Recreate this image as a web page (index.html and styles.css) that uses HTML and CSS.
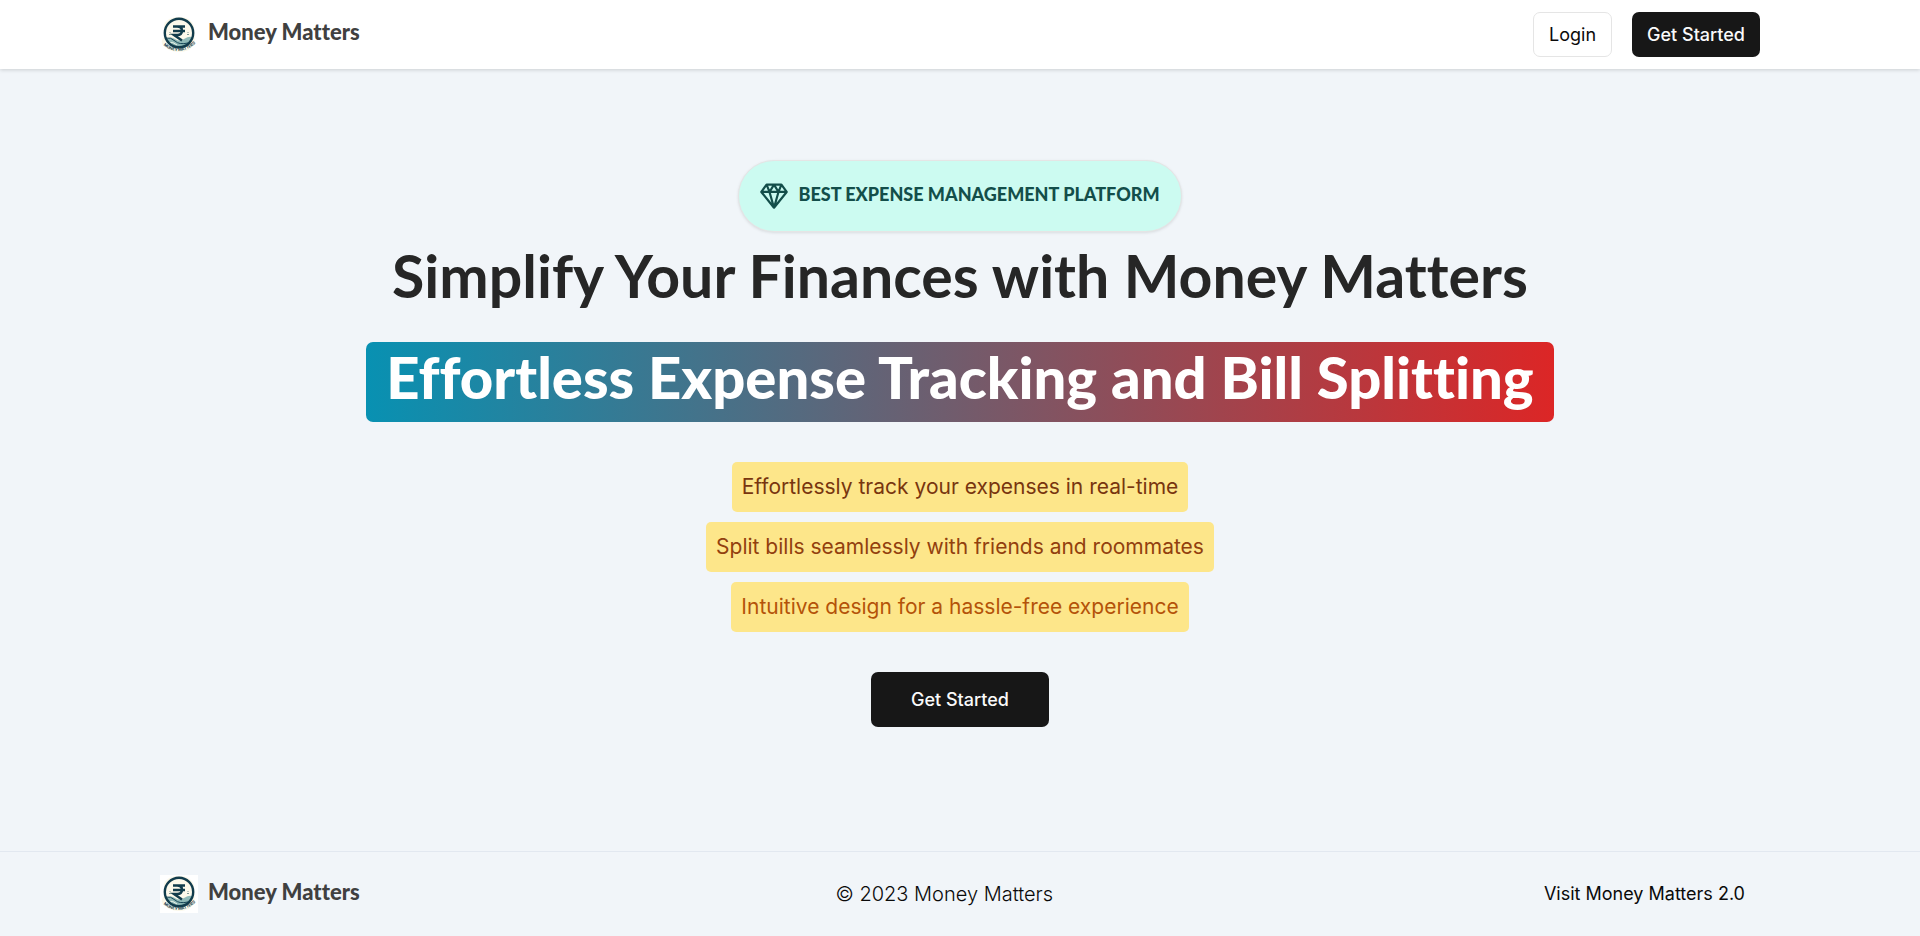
FILE: index.html
```html
<!DOCTYPE html>
<html lang="en">
<head>
<meta charset="utf-8">
<meta name="viewport" content="width=device-width, initial-scale=1">
<title>Money Matters</title>
<link rel="stylesheet" href="styles.css">
</head>
<body>
<header class="header">
  <div class="container">
    <a class="brand" href="#">
      <svg class="logo" viewBox="0 0 38 38" aria-hidden="true">
        <g id="logo">
          <rect width="38" height="38" fill="#fff"/>
          <path d="M4 9Q7 1 19 1t15 9l1 18-6 6q-10 4-20 0l-7-6q-1-4 2-7z" fill="#fcf8e9"/>
          <circle cx="19" cy="17" r="14" fill="#fdf9eb"/>
          <path d="M6 23q5-3 9 0t9 0 8-2l-2 5q-5 5-11 5T8 27z" fill="#8fb9b7"/>
          <path d="M5 22q6-1 10 3t13 2" fill="none" stroke="#174657"/>
          <path d="M8 27q5-2 9 2" fill="none" stroke="#edf4e9"/>
          <circle cx="19" cy="17" r="14.2" fill="none" stroke="#123c4c" stroke-width="2.4"/>
          <path d="M13 10.500h12M13 15h12M14 10.500h3q5 0 5 4.300t-5 4.200h-3l8 5.500" fill="none" stroke="#123c4c" stroke-width="2.500"/>
          <path d="M9 18.500h2M10 16v1M27 18.500h2M28 16v1" stroke="#7d9795"/>
          <path id="logo-arc" d="M2 28Q19 43 37 26" fill="none"/>
          <text class="logo-caption"><textPath href="#logo-arc" startOffset="50%">MONEY MATTERS</textPath></text>
        </g>
      </svg>
      <span>Money Matters</span>
    </a>
    <nav class="actions">
      <a class="button button-outline" href="#">Login</a>
      <a class="button button-dark" href="#">Get Started</a>
    </nav>
  </div>
</header>
<main class="hero">
  <div class="badge">
    <svg class="gem" viewBox="0 0 512 512" fill="none" stroke="currentColor" stroke-width="40" stroke-linejoin="round" aria-hidden="true">
      <path d="M120 48h272l96 134-232 288L24 182zM24 182h464M120 48l54 134 82-134 82 134 54-134M174 182l82 288 82-288"/>
    </svg>
    <span>BEST EXPENSE MANAGEMENT PLATFORM</span>
  </div>
  <h1 class="title">Simplify Your Finances with Money Matters</h1>
  <p class="highlight">Effortless Expense Tracking and Bill Splitting</p>
  <ul class="features">
    <li class="feature feature-first">Effortlessly track your expenses in real-time</li>
    <li class="feature feature-second">Split bills seamlessly with friends and roommates</li>
    <li class="feature feature-third">Intuitive design for a hassle-free experience</li>
  </ul>
  <a class="button button-dark button-large" href="#">Get Started</a>
</main>
<footer class="footer">
  <div class="container">
    <a class="brand" href="#"><svg class="logo" viewBox="0 0 38 38" aria-hidden="true"><use href="#logo"/></svg><span>Money Matters</span></a>
    <p class="copyright">© 2023 Money Matters</p>
    <a class="visit" href="#">Visit Money Matters 2.0</a>
  </div>
</footer>
</body>
</html>
```
FILE: styles.css
```css
* { box-sizing: border-box; }
body {
  margin: 0;
  min-height: 100vh;
  display: flex;
  flex-direction: column;
  background: #f1f5f9;
  color: #0a0a0a;
  font-family: Inter, "Liberation Sans", sans-serif;
  font-variant-ligatures: none;
}
a { color: inherit; text-decoration: none; }
h1, p, ul { margin: 0; padding: 0; }
.container {
  width: 100%;
  max-width: 1600px;
  margin: 0 auto;
  display: flex;
  align-items: center;
  justify-content: space-between;
}
.header {
  padding: 12px 0;
  background: #fff;
  box-shadow: 0 1px 4px rgba(0, 0, 0, 0.16);
}
.brand {
  display: flex;
  align-items: center;
  gap: 10px;
  color: #404040;
  font-family: Lato, sans-serif;
  font-size: 22px;
  font-weight: 900;
  line-height: 30px;
}
.brand span { padding-bottom: 5px; }
.logo { width: 38px; height: 38px; }
.logo-caption {
  fill: #123c4c;
  font-family: Inter, sans-serif;
  font-size: 4px;
  font-weight: 700;
  text-anchor: middle;
}
.actions { display: flex; gap: 20px; }
.button {
  display: inline-flex;
  align-items: center;
  justify-content: center;
  height: 45px;
  padding: 0 15px;
  border-radius: 7px;
  font-size: 18px;
  line-height: 24px;
}
.button-outline { border: 1px solid #e5e5e5; }
.button-dark { background: #171717; color: #fafafa; font-weight: 500; }
.button-large { height: 55px; padding: 0 40px; margin-top: 40px; }
.hero {
  flex: 1;
  display: flex;
  flex-direction: column;
  align-items: center;
  padding: 91px 20px 40px;
}
.badge {
  display: flex;
  align-items: center;
  gap: 10px;
  height: 72px;
  padding: 0 21px;
  border: 1px solid #e5e5e5;
  border-radius: 36px;
  background: #ccfbf1;
  color: #134e4a;
  box-shadow: 0 1px 3px rgba(0, 0, 0, 0.1);
  font-family: Lato, sans-serif;
  font-size: 18px;
  font-weight: 900;
  line-height: 28px;
}
.badge span { padding-bottom: 4px; }
.gem { width: 28px; height: 28px; }
.title {
  margin-top: 4px;
  color: #262626;
  font-family: Lato, sans-serif;
  font-size: 59px;
  font-weight: 700;
  line-height: 80px;
  text-align: center;
}
.highlight {
  margin-top: 26px;
  padding: 0 20px 10px;
  border-radius: 7px;
  background: linear-gradient(to right, #0891b2, #dc2626);
  color: #fff;
  font-family: Lato, sans-serif;
  font-size: 58px;
  font-weight: 900;
  line-height: 70px;
  text-align: center;
}
.features {
  display: flex;
  flex-direction: column;
  align-items: center;
  gap: 10px;
  margin-top: 40px;
  list-style: none;
}
.feature {
  padding: 10px;
  border-radius: 5px;
  background: #fde68a;
  font-size: 21px;
  line-height: 30px;
  font-weight: 400;
}
.feature-first { color: #78350f; }
.feature-second { color: #92400e; }
.feature-third { color: #b45309; }
.footer { padding: 23px 0; border-top: 1px solid #e2e8f0; }
.copyright { font-size: 20px; line-height: 30px; font-weight: 300; }
.visit { padding: 0 15px; font-size: 18px; line-height: 24px; }
```
